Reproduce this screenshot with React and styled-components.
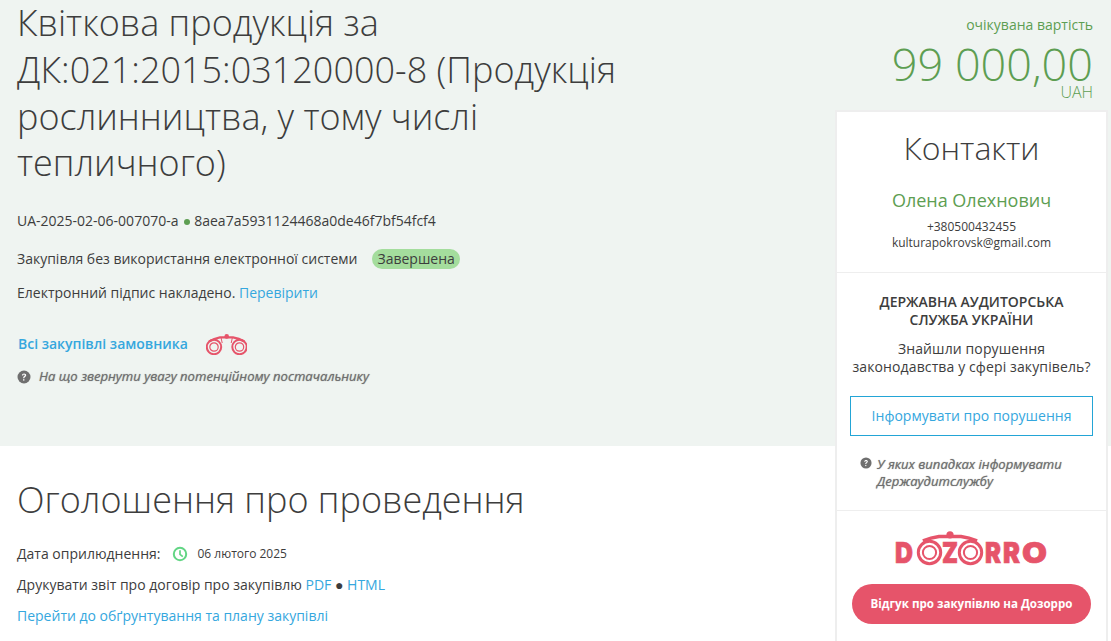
import React from "react";
import styled, { createGlobalStyle } from "styled-components";

const GlobalStyle = createGlobalStyle`
  html, body {
    margin: 0;
    padding: 0;
    height: 641px;
    overflow: hidden;
    background: #fff;
    font-family: "Open Sans", sans-serif;
    color: #3d3d3d;
  }
`;

function Binoculars() {
  return (
    <BinocularsIcon viewBox="0 0 41 21" fill="none" stroke="#e6546a">
      <circle cx="8" cy="13" r="7.2" strokeWidth="2" />
      <circle cx="8" cy="13" r="4.2" strokeWidth="1.2" />
      <circle cx="33.5" cy="13" r="7.2" strokeWidth="2" />
      <circle cx="33.5" cy="13" r="4.2" strokeWidth="1.2" />
      <path d="M3 7.5 Q8 4.5 14 3.4 L27 3.4 Q33 4.5 38.5 7.5" strokeWidth="2.2" />
      <path d="M15 3.5 L16.2 9 M26.4 3.5 L25.2 9" strokeWidth="1" />
      <circle cx="20.7" cy="2.4" r="2.3" fill="#e6546a" stroke="none" />
    </BinocularsIcon>
  );
}

function QuestionIcon() {
  return (
    <HelpMark viewBox="0 0 14 14">
      <circle cx="7" cy="7" r="6.5" fill="#6f6f6f" />
      <path
        d="M4.9 5.4c.1-1.3 1-2 2.2-2 1.2 0 2.1.7 2.1 1.8 0 1.6-1.8 1.5-1.8 3H6.1c0-2 1.7-2 1.7-2.9 0-.4-.3-.7-.8-.7-.5 0-.8.3-.9.8z"
        fill="#fff"
      />
      <rect x="6.1" y="9.2" width="1.3" height="1.4" fill="#fff" />
    </HelpMark>
  );
}

function ClockIcon() {
  return (
    <ClockSvg viewBox="0 0 16 16" fill="none" stroke="#62d584" strokeWidth="2">
      <circle cx="8" cy="8" r="6.2" />
      <path d="M8 4.2V8.4L10.8 10.6" strokeWidth="1.7" />
    </ClockSvg>
  );
}

function DozorroLogo() {
  return (
    <LogoSvg viewBox="0 0 153 42">
      <g fill="none" stroke="#e6546a">
        <circle cx="34.5" cy="21.5" r="11.2" strokeWidth="3" />
        <circle cx="34.5" cy="21.5" r="6.6" strokeWidth="2" />
        <circle cx="75.5" cy="21.5" r="11.2" strokeWidth="3" />
        <circle cx="75.5" cy="21.5" r="6.6" strokeWidth="2" />
        <path d="M28 10 Q36 6.5 44 5.5 L66 5.5 Q74 6.5 82 10" strokeWidth="3.6" />
      </g>
      <circle cx="55" cy="3.8" r="3.6" fill="#e6546a" />
      <LogoLetter x="0" y="32" textLength="18" lengthAdjust="spacingAndGlyphs">D</LogoLetter>
      <LogoLetter x="47" y="32" textLength="16" lengthAdjust="spacingAndGlyphs">Z</LogoLetter>
      <LogoLetter x="90" y="32" textLength="16" lengthAdjust="spacingAndGlyphs">R</LogoLetter>
      <LogoLetter x="108" y="32" textLength="17" lengthAdjust="spacingAndGlyphs">R</LogoLetter>
      <LogoLetter x="127" y="32" textLength="25" lengthAdjust="spacingAndGlyphs">O</LogoLetter>
    </LogoSvg>
  );
}

export default function App() {
  return (
    <Page>
      <GlobalStyle />
      <Hero>
        <HeroMain>
          <Title>
            Квіткова продукція за ДК:021:2015:03120000-8 (Продукція
            рослинництва, у тому числі тепличного)
          </Title>
          <IdLine>
            UA-2025-02-06-007070-a <GreenDot /> 8aea7a5931124468a0de46f7bf54fcf4
          </IdLine>
          <StatusLine>
            Закупівля без використання електронної системи
            <StatusPill>Завершена</StatusPill>
          </StatusLine>
          <SignLine>
            Електронний підпис накладено. <Link href="#">Перевірити</Link>
          </SignLine>
          <BuyerLine>
            <BuyerLink href="#">Всі закупівлі замовника</BuyerLink>
            <Binoculars />
          </BuyerLine>
          <HintLine>
            <QuestionIcon />
            <HintText>На що звернути увагу потенційному постачальнику</HintText>
          </HintLine>
        </HeroMain>
        <Price>
          <PriceLabel>очікувана вартість</PriceLabel>
          <PriceValue>99 000,00</PriceValue>
          <Currency>UAH</Currency>
        </Price>
      </Hero>

      <Content>
        <SectionTitle>Оголошення про проведення</SectionTitle>
        <DateLine>
          Дата оприлюднення:
          <ClockIcon />
          <DateValue>06 лютого 2025</DateValue>
        </DateLine>
        <ReportLine>
          Друкувати звіт про договір про закупівлю <Link href="#">PDF</Link> ●{" "}
          <Link href="#">HTML</Link>
        </ReportLine>
        <PlanLine>
          <Link href="#">Перейти до обґрунтування та плану закупівлі</Link>
        </PlanLine>
      </Content>

      <Sidebar>
        <ContactBlock>
          <ContactTitle>Контакти</ContactTitle>
          <ContactName>Олена Олехнович</ContactName>
          <ContactInfo>+380500432455</ContactInfo>
          <ContactInfo>kulturapokrovsk@gmail.com</ContactInfo>
        </ContactBlock>
        <AuditBlock>
          <AuditTitle>
            ДЕРЖАВНА АУДИТОРСЬКА
            <br />
            СЛУЖБА УКРАЇНИ
          </AuditTitle>
          <AuditText>
            Знайшли порушення
            <br />
            законодавства у сфері закупівель?
          </AuditText>
          <ReportButton>Інформувати про порушення</ReportButton>
          <AuditHint>
            <QuestionIcon />
            <HintText>
              У яких випадках інформувати
              <br />
              Держаудитслужбу
            </HintText>
          </AuditHint>
        </AuditBlock>
        <DozorroBlock>
          <DozorroLogo />
          <DozorroButton>Відгук про закупівлю на Дозорро</DozorroButton>
        </DozorroBlock>
      </Sidebar>
    </Page>
  );
}

const Page = styled.div`
  position: relative;
  width: 1111px;
  height: 641px;
  overflow: hidden;
`;

const Hero = styled.header`
  height: 446px;
  box-sizing: border-box;
  background: #eff4f1;
  display: flex;
  justify-content: space-between;
  padding: 0 18px 0 17px;
`;

const HeroMain = styled.div`
  width: 625px;
`;

const Title = styled.h1`
  margin: 0;
  font-size: 36px;
  line-height: 46.8px;
  font-weight: 300;
  color: #3d3d3d;
`;

const IdLine = styled.div`
  margin-top: 24px;
  font-size: 14px;
  line-height: 20px;
`;

const GreenDot = styled.span`
  display: inline-block;
  width: 6px;
  height: 6px;
  margin: 0 1px 1px 1.5px;
  border-radius: 50%;
  background: #5d9e52;
`;

const StatusLine = styled.div`
  margin-top: 18px;
  font-size: 14px;
  line-height: 20px;
  display: flex;
  align-items: center;
`;

const StatusPill = styled.span`
  margin-left: 15px;
  padding: 0 5px;
  border-radius: 10px;
  background: #a4dd9d;
  font-size: 14px;
  line-height: 20px;
`;

const SignLine = styled.div`
  margin-top: 14px;
  font-size: 14px;
  line-height: 20px;
`;

const Link = styled.a`
  color: #35a7de;
  text-decoration: none;
`;

const BuyerLine = styled.div`
  margin-top: 28px;
  padding-left: 1px;
  display: flex;
  align-items: center;
  height: 24px;
`;

const BuyerLink = styled(Link)`
  font-size: 14px;
  font-weight: 600;
`;

const BinocularsIcon = styled.svg`
  width: 41px;
  height: 21px;
  margin: 3px 0 0 18px;
`;

const HintLine = styled.div`
  margin-top: 13px;
  display: flex;
  align-items: center;
  font-size: 14px;
  line-height: 17px;
`;

const HelpMark = styled.svg`
  width: 14px;
  height: 14px;
  flex: none;
  margin-right: 8px;
`;

const HintText = styled.em`
  font-size: 13.1px;
  font-weight: 400;
  font-style: italic;
  color: #6f6f6f;
  text-shadow: 0 0 1px #8a8a8a;
`;

const Price = styled.div`
  text-align: right;
  padding-top: 15px;
`;

const PriceLabel = styled.div`
  font-size: 14px;
  line-height: 20px;
  color: #5d9e52;
`;

const PriceValue = styled.div`
  margin-top: 9px;
  font-size: 45px;
  line-height: 40px;
  font-weight: 300;
  color: #5d9e52;
`;

const Currency = styled.div`
  margin-top: 3px;
  font-size: 16px;
  line-height: 10px;
  font-weight: 300;
  color: #5d9e52;
`;

const Content = styled.main`
  padding: 31px 17px 0;
`;

const SectionTitle = styled.h2`
  margin: 0;
  font-size: 36px;
  line-height: 45px;
  font-weight: 300;
  color: #3d3d3d;
`;

const DateLine = styled.div`
  margin-top: 22px;
  display: flex;
  align-items: center;
  font-size: 14px;
  line-height: 20px;
`;

const ClockSvg = styled.svg`
  width: 16px;
  height: 16px;
  margin: 0 9px 0 12px;
`;

const DateValue = styled.span`
  font-size: 12px;
`;

const ReportLine = styled.div`
  margin-top: 11px;
  font-size: 14px;
  line-height: 20px;
`;

const PlanLine = styled.div`
  margin-top: 11px;
  font-size: 14px;
  line-height: 20px;
`;

const Sidebar = styled.aside`
  position: absolute;
  top: 110px;
  right: 3px;
  width: 273px;
  height: 540px;
  box-sizing: border-box;
  background: #fff;
  border: 1px solid #eeeeee;
  border-width: 2px 2px 0;
  text-align: center;
`;

const ContactBlock = styled.section`
  height: 161px;
  box-sizing: border-box;
  padding-top: 15px;
  border-bottom: 1px solid #eeeeee;
`;

const ContactTitle = styled.h3`
  margin: 0;
  font-size: 32px;
  line-height: 42px;
  font-weight: 300;
  color: #3d3d3d;
`;

const ContactName = styled.div`
  margin: 19px 0 7px;
  font-size: 18px;
  line-height: 24px;
  color: #5d9e52;
`;

const ContactInfo = styled.div`
  font-size: 12px;
  line-height: 16px;
`;

const AuditBlock = styled.section`
  height: 238px;
  box-sizing: border-box;
  padding: 20px 13px 0;
  border-bottom: 1px solid #eeeeee;
`;

const AuditTitle = styled.div`
  font-size: 14px;
  line-height: 18px;
  font-weight: 600;
`;

const AuditText = styled.div`
  margin-top: 11px;
  font-size: 14px;
  line-height: 18px;
  letter-spacing: 0.12px;
`;

const ReportButton = styled.div`
  margin-top: 20px;
  height: 40px;
  box-sizing: border-box;
  border: 1px solid #23a5d6;
  color: #35a7de;
  font-size: 14px;
  line-height: 38px;
`;

const AuditHint = styled.div`
  margin: 20px 0 0 10px;
  display: flex;
  align-items: flex-start;
  text-align: left;
  line-height: 17px;

  ${HelpMark} {
    width: 12px;
    height: 12px;
    margin: 1px 5px 0 0;
  }
`;

const DozorroBlock = styled.section`
  padding-top: 20px;
  display: flex;
  flex-direction: column;
  align-items: center;
`;

const LogoSvg = styled.svg`
  width: 153px;
  height: 42px;
`;

const LogoLetter = styled.text`
  font-family: "Inter", "Open Sans", sans-serif;
  font-size: 29px;
  font-weight: 900;
  fill: #e6546a;
  stroke: #e6546a;
  stroke-width: 0.7px;
`;

const DozorroButton = styled.div`
  margin-top: 11px;
  width: 239px;
  height: 40px;
  border-radius: 20px;
  background: #e6546a;
  color: #fff;
  font-size: 11.6px;
  font-weight: 700;
  line-height: 40px;
`;
